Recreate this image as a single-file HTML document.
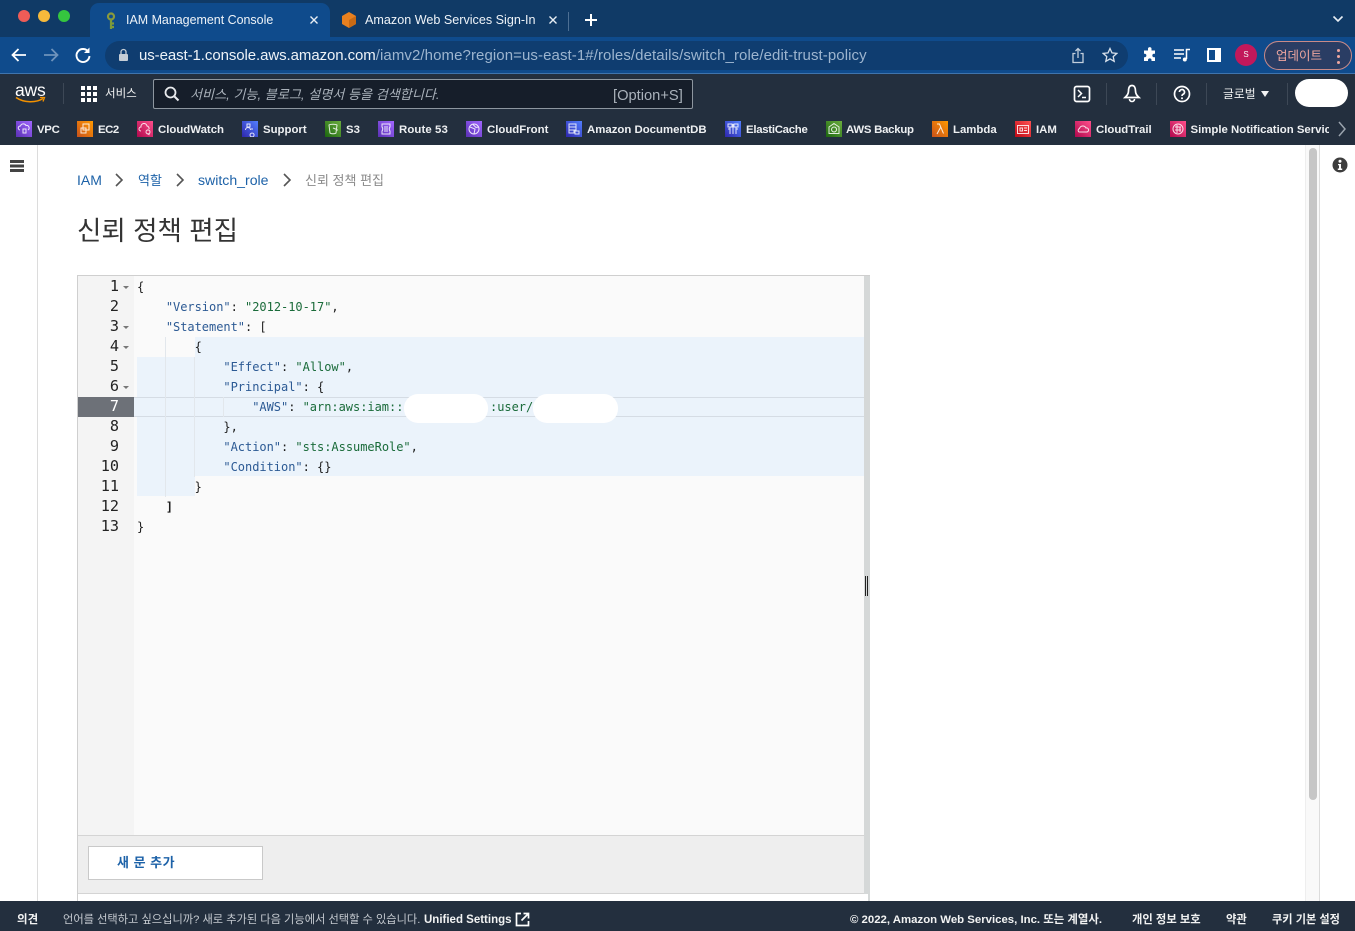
<!DOCTYPE html>
<html lang="ko"><head><meta charset="utf-8"><title>IAM Management Console</title>
<style>
*{box-sizing:border-box}
html,body{margin:0;padding:0;width:1355px;height:931px;overflow:hidden;background:#fff;font-family:"Liberation Sans","Noto Sans CJK KR",sans-serif}
.a{position:absolute}
.t{position:absolute;white-space:nowrap}
.bm{position:absolute;top:121px;height:16px;white-space:nowrap;color:#eef0f2;font-size:11.4px;font-weight:bold;line-height:16px}
.bm svg{position:absolute;left:0;top:0;width:16px;height:16px;display:block}
.bm b{position:absolute;top:1px;left:21px;font-weight:bold}
.ic{fill:none;stroke:#fff;stroke-width:1;opacity:.85}
.code{position:absolute;white-space:pre;font:12px/20px "DejaVu Sans Mono",monospace;color:#1d1d1d;left:137px;height:20px;letter-spacing:-.025px}
.num{position:absolute;left:78px;width:41px;text-align:right;font:15.2px/20px "DejaVu Sans Mono",monospace;color:#222}
.k{color:#2c5a94}.s{color:#1a6b3a}
.fold{position:absolute;left:123px;width:0;height:0;border-left:3px solid transparent;border-right:3px solid transparent;border-top:3px solid #777}
.g{position:absolute;width:1px;background:#e2e7ec}
</style></head><body>

<!-- browser tab strip -->
<div class="a" style="left:0;top:0;width:1355px;height:38px;background:#103a66"></div>
<div class="a" style="left:90px;top:3px;width:240px;height:35px;background:#0f4b8c;border-radius:9px 9px 0 0"></div>
<div class="a" style="left:18px;top:10px;width:12px;height:12px;border-radius:50%;background:#ee5c57"></div>
<div class="a" style="left:38px;top:10px;width:12px;height:12px;border-radius:50%;background:#f6b93b"></div>
<div class="a" style="left:58px;top:10px;width:12px;height:12px;border-radius:50%;background:#35c63f"></div>
<svg class="a" style="left:104px;top:12px" width="14" height="18" viewBox="0 0 14 18"><circle cx="7" cy="4.500" r="3" fill="none" stroke="#8a9a3c" stroke-width="2.200"/><path d="M7 7v10M7 11.500h3M7 15h3" stroke="#7d9a3a" stroke-width="2.200" fill="none"/></svg>
<div class="t" style="left:126px;top:11px;font-size:12.450px;line-height:18px;color:#eef3f8">IAM Management Console</div>
<svg class="a" style="left:309px;top:15px" width="10" height="10" viewBox="0 0 10 10"><path d="M1.500 1.500l7 7M8.500 1.500l-7 7" stroke="#e8eef4" stroke-width="1.400"/></svg>
<svg class="a" style="left:341px;top:11px" width="16" height="18" viewBox="0 0 16 18"><path d="M8 1l7 4v8l-7 4-7-4V5z" fill="#e8801f"/><path d="M8 9l7-4v8l-7 4z" fill="#c96a14"/></svg>
<div class="t" style="left:365px;top:11px;font-size:12.600px;line-height:18px;color:#eef3f8">Amazon Web Services Sign-In</div>
<svg class="a" style="left:548px;top:15px" width="10" height="10" viewBox="0 0 10 10"><path d="M1.500 1.500l7 7M8.500 1.500l-7 7" stroke="#e8eef4" stroke-width="1.400"/></svg>
<div class="a" style="left:568px;top:12px;width:1px;height:19px;background:#4d6f93"></div>
<svg class="a" style="left:584px;top:13px" width="14" height="14" viewBox="0 0 14 14"><path d="M7 1v12M1 7h12" stroke="#fff" stroke-width="2"/></svg>
<svg class="a" style="left:1332px;top:15px" width="12" height="8" viewBox="0 0 12 8"><path d="M1.500 1.500L6 6l4.500-4.500" stroke="#e8eef4" stroke-width="1.600" fill="none"/></svg>

<!-- address row -->
<div class="a" style="left:0;top:37px;width:1355px;height:36px;background:#0f4b8c"></div>
<div class="a" style="left:0;top:73px;width:1355px;height:1px;background:#3f74ad"></div>
<div class="a" style="left:105px;top:41px;width:1023px;height:29px;border-radius:15px;background:#0f3d70"></div>
<svg class="a" style="left:10px;top:46px" width="18" height="18" viewBox="0 0 18 18"><path d="M16 9H3M8.500 3L2.500 9l6 6" stroke="#fff" stroke-width="1.800" fill="none"/></svg>
<svg class="a" style="left:42px;top:46px" width="18" height="18" viewBox="0 0 18 18"><path d="M2 9h13M9.500 3l6 6-6 6" stroke="#6f93bb" stroke-width="1.800" fill="none"/></svg>
<svg class="a" style="left:74px;top:46px" width="18" height="18" viewBox="0 0 18 18"><path d="M14.500 6A6.500 6.500 0 1 0 15.500 10" stroke="#fff" stroke-width="1.900" fill="none"/><path d="M15.500 1.500v5.500H10z" fill="#fff"/></svg>
<svg class="a" style="left:118px;top:48px" width="11" height="14" viewBox="0 0 11 14"><path d="M3 6V4a2.500 2.500 0 0 1 5 0v2" stroke="#c6ced6" stroke-width="1.300" fill="none"/><rect x="1" y="6" width="9" height="7" rx="1" fill="#c6ced6"/></svg>
<div class="t" style="left:139px;top:46px;font-size:15px;line-height:19px;color:#eef3f8"><span style="letter-spacing:-.08px">us-east-1.console.aws.amazon.com</span><span style="color:#9db5cf;letter-spacing:.085px">/iamv2/home?region=us-east-1#/roles/details/switch_role/edit-trust-policy</span></div>
<svg class="a" style="left:1071px;top:47px" width="14" height="17" viewBox="0 0 14 17"><path d="M4.500 6.500H2v9h10v-9H9.500M7 11V1.500M4.500 4L7 1.500 9.500 4" stroke="#c3cfdc" stroke-width="1.300" fill="none"/></svg>
<svg class="a" style="left:1102px;top:47px" width="16" height="16" viewBox="0 0 16 16"><path d="M8 1.500l2 4.400 4.800.5-3.600 3.200 1 4.700L8 11.900l-4.200 2.400 1-4.700L1.200 6.400 6 5.900z" stroke="#d7e0ea" stroke-width="1.300" fill="none"/></svg>
<svg class="a" style="left:1142px;top:47px" width="16" height="16" viewBox="0 0 16 16"><path d="M6 1.500a1.800 1.800 0 0 1 3.500 0V3.500H13v3.300h-1.300a1.800 1.800 0 0 0 0 3.500H13V14H9.500v-1.200a1.800 1.800 0 0 0-3.500 0V14H2v-3.700h1a1.800 1.800 0 0 0 0-3.500H2V3.500h4z" fill="#fff"/></svg>
<svg class="a" style="left:1173px;top:47px" width="18" height="16" viewBox="0 0 18 16"><path d="M1 3h10M1 7h10M1 11h7" stroke="#fff" stroke-width="1.500"/><path d="M13.500 12V2.500H17" stroke="#fff" stroke-width="1.500" fill="none"/><circle cx="11.800" cy="12.500" r="2" fill="#fff"/></svg>
<div class="a" style="left:1207px;top:48px;width:14px;height:14px;background:#fff"></div>
<div class="a" style="left:1209px;top:50px;width:6px;height:10px;background:#0f4b8c"></div>
<div class="a" style="left:1235px;top:44px;width:22px;height:22px;border-radius:50%;background:#c2185b;color:#f5f5f5;font-size:8px;line-height:22px;text-align:center">S</div>
<div class="a" style="left:1264px;top:41px;width:88px;height:29px;border-radius:15px;border:1px solid #c98a88;background:#2a3d64"></div>
<div class="t" style="left:1276px;top:47px;font-size:12.500px;line-height:18px;color:#eea69f">업데이트</div>
<div class="a" style="left:1337px;top:49px;width:3px;height:3px;border-radius:50%;background:#eea69f;box-shadow:0 6px 0 #eea69f,0 12px 0 #eea69f"></div>

<!-- AWS nav -->
<div class="a" style="left:0;top:74px;width:1355px;height:71px;background:#232f3e"></div>
<div class="t" style="left:15px;top:80px;font-size:17.500px;line-height:20px;color:#fff;letter-spacing:-.2px">aws</div>
<svg class="a" style="left:14px;top:96px" width="34" height="9" viewBox="0 0 34 9"><path d="M2 1.500C10 7 22 7 29 2.500" stroke="#f29100" stroke-width="1.600" fill="none"/><path d="M26 1.500l4.500 0-1.500 4" stroke="#f29100" stroke-width="1.300" fill="none"/></svg>
<div class="a" style="left:63px;top:83px;width:1px;height:21px;background:#3d4856"></div>
<div class="a" style="left:81px;top:86px;width:16px;height:16px;background:
linear-gradient(#fff,#fff) 0 0/4px 4px no-repeat,linear-gradient(#fff,#fff) 6px 0/4px 4px no-repeat,linear-gradient(#fff,#fff) 12px 0/4px 4px no-repeat,
linear-gradient(#fff,#fff) 0 6px/4px 4px no-repeat,linear-gradient(#fff,#fff) 6px 6px/4px 4px no-repeat,linear-gradient(#fff,#fff) 12px 6px/4px 4px no-repeat,
linear-gradient(#fff,#fff) 0 12px/4px 4px no-repeat,linear-gradient(#fff,#fff) 6px 12px/4px 4px no-repeat,linear-gradient(#fff,#fff) 12px 12px/4px 4px no-repeat"></div>
<div class="t" style="left:105px;top:86px;font-size:11.500px;line-height:17px;color:#f2f3f3">서비스</div>
<div class="a" style="left:153px;top:79px;width:540px;height:30px;background:#161e2a;border:1px solid #8d969f;border-radius:2px"></div>
<svg class="a" style="left:164px;top:86px" width="16" height="16" viewBox="0 0 16 16"><circle cx="6.500" cy="6.500" r="5" stroke="#e8eaed" stroke-width="1.800" fill="none"/><path d="M10.500 10.500l4 4" stroke="#e8eaed" stroke-width="2"/></svg>
<div class="t" style="left:190px;top:85px;font-size:13.100px;line-height:19px;color:#aab2bb;font-style:italic">서비스, 기능, 블로그, 설명서 등을 검색합니다.</div>
<div class="t" style="left:613px;top:87px;font-size:14.700px;line-height:19px;color:#aab2bb">[Option+S]</div>
<svg class="a" style="left:1073px;top:85px" width="18" height="18" viewBox="0 0 18 18"><rect x="1.500" y="1.500" width="15" height="15" rx="2" stroke="#fff" stroke-width="1.700" fill="none"/><path d="M5 5l3.500 3.500L5 12M9 12.500h4" stroke="#fff" stroke-width="1.500" fill="none"/></svg>
<div class="a" style="left:1106px;top:83px;width:1px;height:22px;background:#3d4856"></div>
<svg class="a" style="left:1123px;top:84px" width="18" height="19" viewBox="0 0 18 19"><path d="M9 1.500C6.500 1.500 5.500 4 5.500 7c0 3-1.500 4.500-3.500 6.500h14c-2-2-3.500-3.500-3.500-6.500 0-3-1-5.500-3.500-5.500z" stroke="#fff" stroke-width="1.700" fill="none"/><path d="M6.500 15a2.500 2.500 0 0 0 5 0" stroke="#fff" stroke-width="1.600" fill="none"/></svg>
<div class="a" style="left:1156px;top:83px;width:1px;height:22px;background:#3d4856"></div>
<svg class="a" style="left:1173px;top:85px" width="18" height="18" viewBox="0 0 18 18"><circle cx="9" cy="9" r="7.500" stroke="#fff" stroke-width="1.700" fill="none"/><path d="M6.500 7a2.500 2.500 0 1 1 3.500 2.300c-.7.4-1 .8-1 1.700" stroke="#fff" stroke-width="1.700" fill="none"/><circle cx="9" cy="13.300" r="1" fill="#fff"/></svg>
<div class="a" style="left:1206px;top:83px;width:1px;height:22px;background:#3d4856"></div>
<div class="t" style="left:1223px;top:86px;font-size:11.800px;line-height:17px;color:#f2f3f3">글로벌</div>
<div class="a" style="left:1261px;top:91px;width:0;height:0;border-left:4.500px solid transparent;border-right:4.500px solid transparent;border-top:6px solid #f2f3f3"></div>
<div class="a" style="left:1287px;top:83px;width:1px;height:22px;background:#3d4856"></div>
<div class="a" style="left:1295px;top:79px;width:53px;height:28px;border-radius:14px;background:#fff"></div>

<!-- bookmarks -->
<svg width="0" height="0" style="position:absolute"><defs>
<linearGradient id="p" x1="0" y1="1" x2="1" y2="0"><stop offset="0" stop-color="#5a30b5"/><stop offset="1" stop-color="#a166ff"/></linearGradient>
<linearGradient id="o" x1="0" y1="1" x2="1" y2="0"><stop offset="0" stop-color="#c8511b"/><stop offset="1" stop-color="#ff9900"/></linearGradient>
<linearGradient id="r" x1="0" y1="1" x2="1" y2="0"><stop offset="0" stop-color="#b0084d"/><stop offset="1" stop-color="#ff4f8b"/></linearGradient>
<linearGradient id="b" x1="0" y1="1" x2="1" y2="0"><stop offset="0" stop-color="#2e27ad"/><stop offset="1" stop-color="#527fff"/></linearGradient>
<linearGradient id="g" x1="0" y1="1" x2="1" y2="0"><stop offset="0" stop-color="#1b660f"/><stop offset="1" stop-color="#6cae3e"/></linearGradient>
<linearGradient id="e" x1="0" y1="1" x2="1" y2="0"><stop offset="0" stop-color="#bd0816"/><stop offset="1" stop-color="#ff5252"/></linearGradient>
</defs></svg>
<div class="bm" style="left:16px"><svg viewBox="0 0 16 16"><rect width="16" height="16" fill="url(#p)"/><path class="ic" d="M4 9a2 2 0 0 1 .5-4 3 3 0 0 1 5.500-.5 2.500 2.500 0 0 1 2 4.500M7 8h3v4H7z"/></svg><b style="letter-spacing:-.3px">VPC</b></div>
<div class="bm" style="left:77px"><svg viewBox="0 0 16 16"><rect width="16" height="16" fill="url(#o)"/><path class="ic" d="M6 3h6v6H6zM4 7h5v5H4z"/></svg><b style="letter-spacing:-.5px">EC2</b></div>
<div class="bm" style="left:137px"><svg viewBox="0 0 16 16"><rect width="16" height="16" fill="url(#r)"/><path class="ic" d="M4 10a2 2 0 0 1 0-4 3 3 0 0 1 6-1 2.500 2.500 0 0 1 2 3M9 11a2 2 0 1 0 0-.1M10.500 12.500l2 1.500"/></svg><b>CloudWatch</b></div>
<div class="bm" style="left:242px"><svg viewBox="0 0 16 16"><rect width="16" height="16" fill="url(#b)"/><path class="ic" d="M5 3h3v3H5zM3.500 9a2.500 2.500 0 0 1 5 0M10 12a2 2 0 1 0 .1 0M9 8h2"/></svg><b>Support</b></div>
<div class="bm" style="left:325px"><svg viewBox="0 0 16 16"><rect width="16" height="16" fill="url(#g)"/><path class="ic" d="M4 4c1.500-1 6.500-1 8 0l-1 8c-1 1-5 1-6 0zM8 7l5 2"/></svg><b>S3</b></div>
<div class="bm" style="left:378px"><svg viewBox="0 0 16 16"><rect width="16" height="16" fill="url(#p)"/><path class="ic" d="M4 3h8v3c-1 1-1 3 0 4v3H4v-3c1-1 1-3 0-4zM6 6h4M6 8h4M6 10h4"/></svg><b style="letter-spacing:.1px">Route 53</b></div>
<div class="bm" style="left:466px"><svg viewBox="0 0 16 16"><rect width="16" height="16" fill="url(#p)"/><circle class="ic" cx="8" cy="8" r="5"/><path class="ic" d="M4 6l5 2-1 5M7 3.500l3 3 2.500-.5"/></svg><b>CloudFront</b></div>
<div class="bm" style="left:566px"><svg viewBox="0 0 16 16"><rect width="16" height="16" fill="url(#b)"/><path class="ic" d="M3 3h7v3H3zM3 6h7v3H3zM3 9h5v3H3zM9 10h4v3H9z"/></svg><b>Amazon DocumentDB</b></div>
<div class="bm" style="left:725px"><svg viewBox="0 0 16 16"><rect width="16" height="16" fill="url(#b)"/><path class="ic" d="M3 3h4v3H3zM9 3h4v3H9zM5 6v7M11 6v7M8 3v10M3 8h2M11 8h2"/></svg><b style="letter-spacing:-.28px">ElastiCache</b></div>
<div class="bm" style="left:826px"><svg viewBox="0 0 16 16"><rect width="16" height="16" fill="url(#g)"/><path class="ic" d="M8 2.500l5 3.500v6.500H3V6zM8 6a2.500 2.500 0 1 0 .1 0"/></svg><b style="left:20px;letter-spacing:-.25px">AWS Backup</b></div>
<div class="bm" style="left:932px"><svg viewBox="0 0 16 16"><rect width="16" height="16" fill="url(#o)"/><path class="ic" d="M5 3h2.500l4 9.500M8.500 6.500L5 13"/></svg><b>Lambda</b></div>
<div class="bm" style="left:1015px"><svg viewBox="0 0 16 16"><rect width="16" height="16" fill="url(#e)"/><path class="ic" d="M2.500 4.500h11v8h-11zM5 7h2.500v3H5zM9 7h3M9 9.500h3"/></svg><b>IAM</b></div>
<div class="bm" style="left:1075px"><svg viewBox="0 0 16 16"><rect width="16" height="16" fill="url(#r)"/><path class="ic" d="M4 11a2 2 0 0 1 .5-3.500A3.500 3.500 0 0 1 11 7a2 2 0 0 1 1 4z"/></svg><b>CloudTrail</b></div>
<div class="bm" style="left:1170px;width:159px;overflow:hidden"><svg viewBox="0 0 16 16"><rect width="16" height="16" fill="url(#r)"/><circle class="ic" cx="8" cy="8" r="5"/><path class="ic" d="M5 6h6M5 9h6M7 4v8M10 6v5"/></svg><b style="left:20.500px">Simple Notification Service</b></div>
<svg class="a" style="left:1337px;top:121px" width="10" height="16" viewBox="0 0 10 16"><path d="M2 1l6 7-6 7" stroke="#9aa3ad" stroke-width="1.500" fill="none"/></svg>

<!-- side rails -->
<div class="a" style="left:37px;top:145px;width:1px;height:756px;background:#dcdcdc"></div>
<div class="a" style="left:10px;top:160px;width:14px;height:2.500px;background:#444;box-shadow:0 4.500px 0 #444,0 9px 0 #444"></div>
<div class="a" style="left:1305px;top:145px;width:15px;height:756px;background:#f9f9f9;border-left:1px solid #eee;border-right:1px solid #dcdcdc"></div>
<div class="a" style="left:1309px;top:148px;width:8px;height:652px;border-radius:4px;background:#c6c6c6"></div>
<svg class="a" style="left:1332px;top:157px" width="16" height="16" viewBox="0 0 16 16"><circle cx="8" cy="8" r="7.500" fill="#3d3d3d"/><circle cx="8" cy="4.200" r="1.500" fill="#fff"/><path d="M6 7h3v4.500h1.200V13H5.800v-1.500H7V8.300H6z" fill="#fff"/></svg>

<!-- breadcrumb -->
<div class="t" style="left:77px;top:171px;font-size:14px;line-height:18px;color:#1d62a8">IAM</div>
<svg class="a" style="left:114px;top:172px" width="11" height="16" viewBox="0 0 11 16"><path d="M2 2l6 6-6 6" stroke="#555" stroke-width="1.600" fill="none"/></svg>
<div class="t" style="left:138px;top:172px;font-size:13px;line-height:18px;color:#1d62a8">역할</div>
<svg class="a" style="left:175px;top:172px" width="11" height="16" viewBox="0 0 11 16"><path d="M2 2l6 6-6 6" stroke="#555" stroke-width="1.600" fill="none"/></svg>
<div class="t" style="left:198px;top:171px;font-size:14.100px;line-height:18px;color:#1d62a8">switch_role</div>
<svg class="a" style="left:282px;top:172px" width="11" height="16" viewBox="0 0 11 16"><path d="M2 2l6 6-6 6" stroke="#555" stroke-width="1.600" fill="none"/></svg>
<div class="t" style="left:305px;top:172px;font-size:13px;line-height:18px;color:#8a8a8a">신뢰 정책 편집</div>
<div class="t" style="left:77px;top:213px;font-size:26.500px;line-height:36px;color:#333">신뢰 정책 편집</div>

<!-- editor -->
<div class="a" style="left:77px;top:275px;width:793px;height:626px;border:1px solid #cfcfcf;background:#fafafa"></div>
<div class="a" style="left:78px;top:276px;width:56px;height:559px;background:#f4f4f4"></div>
<div class="a" style="left:864px;top:276px;width:6px;height:625px;background:#d5d8d8"></div>
<svg class="a" style="left:864px;top:576px" width="5" height="20" viewBox="0 0 5 20"><path d="M1.500 0v20M3.500 0v20" stroke="#222" stroke-width="1"/></svg>

<!-- selection -->
<div class="a" style="left:195px;top:337px;width:669px;height:20px;background:#ebf3fb"></div>
<div class="a" style="left:137px;top:357px;width:727px;height:119px;background:#ebf3fb"></div>
<div class="a" style="left:137px;top:476px;width:58px;height:20px;background:#ebf3fb"></div>
<div class="a" style="left:134px;top:397px;width:730px;height:20px;background:#ebf3fb;border-top:1px solid #d5dce4;border-bottom:1px solid #d5dce4"></div>
<div class="a" style="left:78px;top:397px;width:56px;height:20px;background:#6d7178"></div>

<div class="g" style="left:165px;top:337px;height:160px"></div>
<div class="g" style="left:194px;top:357px;height:120px"></div>
<div class="g" style="left:223px;top:397px;height:20px"></div>

<div class="num" style="top:276px">1</div><div class="fold" style="top:286px"></div>
<div class="num" style="top:296px">2</div>
<div class="num" style="top:316px">3</div><div class="fold" style="top:326px"></div>
<div class="num" style="top:336px">4</div><div class="fold" style="top:346px"></div>
<div class="num" style="top:356px">5</div>
<div class="num" style="top:376px">6</div><div class="fold" style="top:386px"></div>
<div class="num" style="top:396px;color:#fff">7</div>
<div class="num" style="top:416px">8</div>
<div class="num" style="top:436px">9</div>
<div class="num" style="top:456px">10</div>
<div class="num" style="top:476px">11</div>
<div class="num" style="top:496px">12</div>
<div class="num" style="top:516px">13</div>

<div class="code" style="top:277px">{</div>
<div class="code" style="top:297px">    <span class="k">"Version"</span>: <span class="s">"2012-10-17"</span>,</div>
<div class="code" style="top:317px">    <span class="k">"Statement"</span>: [</div>
<div class="code" style="top:337px">        {</div>
<div class="code" style="top:357px">            <span class="k">"Effect"</span>: <span class="s">"Allow"</span>,</div>
<div class="code" style="top:377px">            <span class="k">"Principal"</span>: {</div>
<div class="code" style="top:397px">                <span class="k">"AWS"</span>: <span class="s">"arn:aws:iam::</span></div>
<div class="code" style="top:397px;left:490px"><span class="s">:user/</span></div>
<div class="code" style="top:417px">            },</div>
<div class="code" style="top:437px">            <span class="k">"Action"</span>: <span class="s">"sts:AssumeRole"</span>,</div>
<div class="code" style="top:457px">            <span class="k">"Condition"</span>: {}</div>
<div class="code" style="top:477px">        }</div>
<div class="code" style="top:497px;font-weight:bold">    ]</div>
<div class="code" style="top:517px">}</div>
<div class="a" style="left:404px;top:394px;width:84px;height:29px;border-radius:14px;background:#fff"></div>
<div class="a" style="left:533px;top:394px;width:85px;height:29px;border-radius:14px;background:#fff"></div>

<!-- editor bottom -->
<div class="a" style="left:78px;top:835px;width:786px;height:59px;background:#eeeeee;border-top:1px solid #d4d4d4;border-bottom:1px solid #d4d4d4"></div>
<div class="a" style="left:88px;top:846px;width:175px;height:34px;background:#fff;border:1px solid #c9c9c9"></div>
<div class="t" style="left:117px;top:854px;font-size:13px;line-height:18px;font-weight:bold;color:#1d62a8;letter-spacing:.5px">새 문 추가</div>
<div class="a" style="left:78px;top:894px;width:790px;height:7px;background:#fff"></div>

<!-- footer -->
<div class="a" style="left:0;top:901px;width:1355px;height:30px;background:#232f3e"></div>
<div class="t" style="left:17px;top:912px;font-size:11.500px;line-height:17px;color:#f2f3f3;font-weight:bold">의견</div>
<div class="t" style="left:63px;top:912px;font-size:11.230px;line-height:17px;color:#c5cad0">언어를 선택하고 싶으십니까? 새로 추가된 다음 기능에서 선택할 수 있습니다.</div>
<div class="t" style="left:424px;top:912px;font-size:11.500px;line-height:17px;color:#f2f3f3;font-weight:bold">Unified Settings</div>
<svg class="a" style="left:515px;top:912px" width="15" height="15" viewBox="0 0 15 15"><path d="M6 1.500H1.500v12h12V9M8.500 1.500h5v5M13 2L6.500 8.500" stroke="#fff" stroke-width="1.700" fill="none"/></svg>
<div class="t" style="left:850px;top:912px;font-size:11.400px;line-height:17px;color:#f2f3f3;font-weight:bold">© 2022, Amazon Web Services, Inc. 또는 계열사.</div>
<div class="t" style="left:1132px;top:912px;font-size:11.300px;line-height:17px;color:#f2f3f3;font-weight:bold">개인 정보 보호</div>
<div class="t" style="left:1226px;top:912px;font-size:11.300px;line-height:17px;color:#f2f3f3;font-weight:bold">약관</div>
<div class="t" style="left:1272px;top:912px;font-size:11.200px;line-height:17px;color:#f2f3f3;font-weight:bold">쿠키 기본 설정</div>
</body></html>
